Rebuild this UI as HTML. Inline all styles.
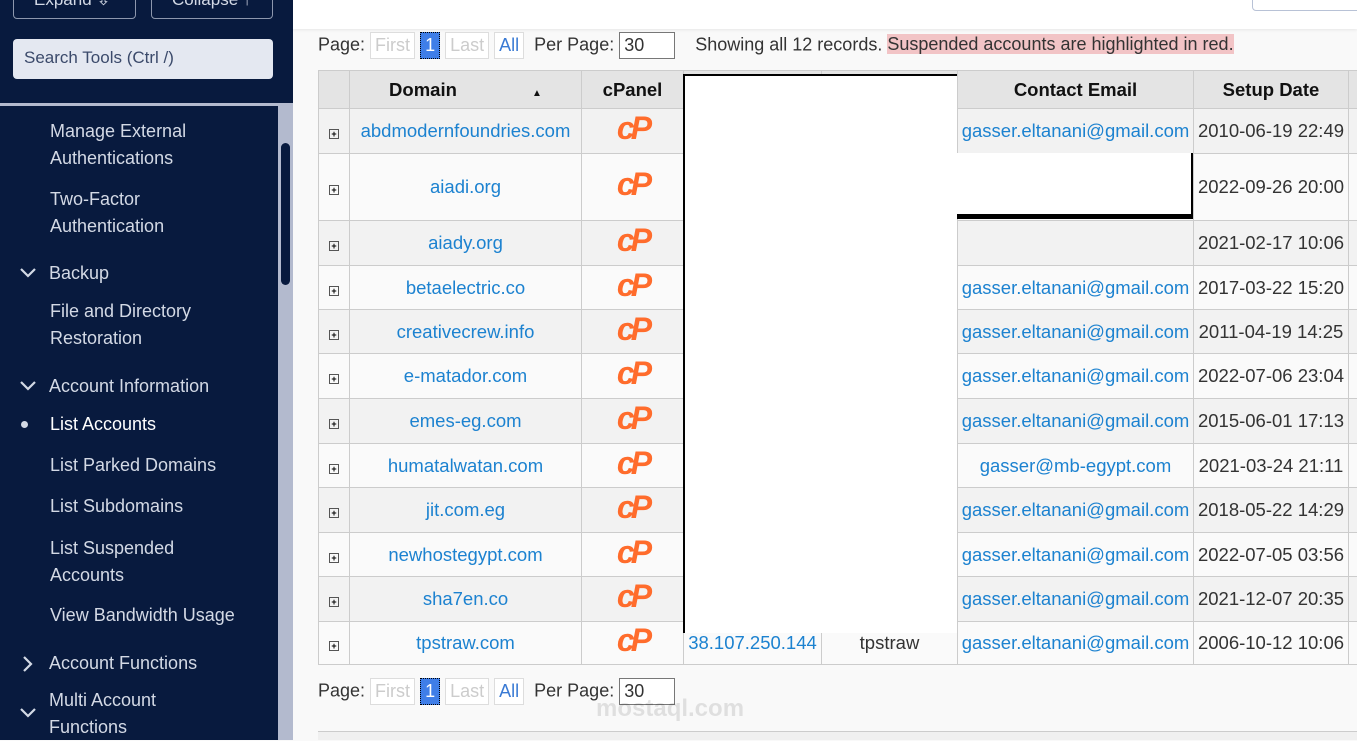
<!DOCTYPE html><html><head><meta charset="utf-8"><style>
*{margin:0;padding:0;box-sizing:border-box}
body{width:1357px;height:740px;overflow:hidden;background:#f9f9f9;font-family:"Liberation Sans",sans-serif;position:relative}
#sb{position:absolute;left:0;top:0;width:293px;height:740px;background:#081a3e}
#sb .t{position:absolute;color:#d3d9e5;font-size:18px;line-height:27px}
.btn{position:absolute;top:-10px;height:29px;border:1px solid #8d97ad;border-radius:4px;color:#d3d9e5;font-size:17px;padding:0 20px;line-height:18px}
#track{position:absolute;left:278px;top:106px;width:15px;height:634px;background:#b3bace}
#thumb{position:absolute;left:281px;top:143px;width:9px;height:142px;background:#081a3e;border-radius:5px}
#top{position:absolute;left:293px;top:0;width:1064px;height:29px;background:#fff;box-shadow:0 1px 3px rgba(0,0,0,.08)}
.pg{position:absolute;font-size:18px;color:#333;font-family:"Liberation Sans",sans-serif;white-space:nowrap}
.pb{display:inline-block;border:1px solid #ddd;background:#fff;color:#ccc;padding:0 4px;height:27px;line-height:25px;vertical-align:middle}
table{position:absolute;left:318px;top:70px;border-collapse:collapse;font-size:18.5px;color:#333;table-layout:fixed;width:1050px}
td,th{border:1px solid #ccc;text-align:center;padding:0;white-space:nowrap;overflow:hidden}
th{background:#e4e4e4;height:38px;font-weight:bold;color:#111}
tr:nth-child(even) td{background:#f2f2f2}
tr:nth-child(odd) td{background:#fafafa}
a{color:#1c82d0;text-decoration:none}
.ex{display:inline-block;width:10px;height:10px;border:1px solid #555;font-size:9px;line-height:8px;color:#000;text-align:center;font-weight:bold}
.cp{color:#ff6c2c;font-weight:bold;font-style:italic;font-size:32px;letter-spacing:-4px;font-family:"Liberation Sans",sans-serif;line-height:20px}
</style></head><body>
<div id="sb">
<div class="btn" style="left:13px;width:123px">Expand ⇩</div>
<div class="btn" style="left:151px;width:122px">Collapse ↑</div>
<div style="position:absolute;left:13px;top:39px;width:260px;height:40px;background:#e4e8f1;border-radius:4px;color:#3b4a6b;font-size:17px;padding:9px 11px">Search Tools (Ctrl /)</div>
<div style="position:absolute;left:0;top:103px;width:293px;height:3px;background:#b3bace"></div>
<div class="t" style="left:50px;top:118px">Manage External<br>Authentications</div>
<div class="t" style="left:50px;top:186px">Two-Factor<br>Authentication</div>
<div class="t" style="left:49px;top:260px">Backup</div>
<div class="t" style="left:50px;top:298px">File and Directory<br>Restoration</div>
<div class="t" style="left:49px;top:373px">Account Information</div>
<div style="position:absolute;left:21px;top:421px;width:7px;height:7px;border-radius:50%;background:#d3d9e5"></div>
<div class="t" style="left:50px;top:411px;color:#fff">List Accounts</div>
<div class="t" style="left:50px;top:452px">List Parked Domains</div>
<div class="t" style="left:50px;top:493px">List Subdomains</div>
<div class="t" style="left:50px;top:535px">List Suspended<br>Accounts</div>
<div class="t" style="left:50px;top:602px">View Bandwidth Usage</div>
<svg style="position:absolute;left:22px;top:655px" width="12" height="18"><path d="M2 2l7 7-7 7" stroke="#d3d9e5" stroke-width="2.2" fill="none"/></svg>
<div class="t" style="left:49px;top:650px">Account Functions</div>
<div class="t" style="left:49px;top:687px">Multi Account<br>Functions</div>
<svg style="position:absolute;left:19px;top:267px" width="18" height="12"><path d="M2 2l7 7 7-7" stroke="#d3d9e5" stroke-width="2.2" fill="none"/></svg>
<svg style="position:absolute;left:19px;top:380px" width="18" height="12"><path d="M2 2l7 7 7-7" stroke="#d3d9e5" stroke-width="2.2" fill="none"/></svg>
<svg style="position:absolute;left:19px;top:707px" width="18" height="12"><path d="M2 2l7 7 7-7" stroke="#d3d9e5" stroke-width="2.2" fill="none"/></svg>
<div id="track"></div><div id="thumb"></div>
</div>
<div id="top"><div style="position:absolute;left:959px;top:-5px;width:110px;height:16px;border:1px solid #b8c2d6;border-radius:4px"></div></div>
<div class="pg" style="left:318px;top:32px">Page: <span class="pb">First</span> <span class="pb" style="background:#3f7ee8;color:#fff;border:1px dotted #000">1</span> <span class="pb">Last</span> <span class="pb" style="color:#3a7ad4">All</span> &nbsp;Per Page: <span class="pb" style="width:56px;color:#333;border-color:#777">30</span> &nbsp;&nbsp; Showing all 12 records. <span style="background:#f2c4c6">Suspended accounts are highlighted in red.</span></div>
<table>
<colgroup><col style="width:31px"><col style="width:232px"><col style="width:102px"><col style="width:138px"><col style="width:136px"><col style="width:236px"><col style="width:155px"><col style="width:20px"></colgroup>
<tr><th></th><th>Domain <span style="font-size:10px;margin-left:70px">▲</span></th><th>cPanel</th><th></th><th></th><th>Contact Email</th><th>Setup Date</th><th></th></tr>
<tr style="height:45px"><td><span class="ex">+</span></td><td><a>abdmodernfoundries.com</a></td><td><span class="cp">cP</span></td><td></td><td></td><td><a>gasser.eltanani@gmail.com</a></td><td>2010-06-19 22:49</td><td></td></tr>
<tr style="height:67px"><td><span class="ex">+</span></td><td><a>aiadi.org</a></td><td><span class="cp">cP</span></td><td></td><td></td><td></td><td>2022-09-26 20:00</td><td></td></tr>
<tr style="height:45px"><td><span class="ex">+</span></td><td><a>aiady.org</a></td><td><span class="cp">cP</span></td><td></td><td></td><td></td><td>2021-02-17 10:06</td><td></td></tr>
<tr style="height:44px"><td><span class="ex">+</span></td><td><a>betaelectric.co</a></td><td><span class="cp">cP</span></td><td></td><td></td><td><a>gasser.eltanani@gmail.com</a></td><td>2017-03-22 15:20</td><td></td></tr>
<tr style="height:44px"><td><span class="ex">+</span></td><td><a>creativecrew.info</a></td><td><span class="cp">cP</span></td><td></td><td></td><td><a>gasser.eltanani@gmail.com</a></td><td>2011-04-19 14:25</td><td></td></tr>
<tr style="height:45px"><td><span class="ex">+</span></td><td><a>e-matador.com</a></td><td><span class="cp">cP</span></td><td></td><td></td><td><a>gasser.eltanani@gmail.com</a></td><td>2022-07-06 23:04</td><td></td></tr>
<tr style="height:45px"><td><span class="ex">+</span></td><td><a>emes-eg.com</a></td><td><span class="cp">cP</span></td><td></td><td></td><td><a>gasser.eltanani@gmail.com</a></td><td>2015-06-01 17:13</td><td></td></tr>
<tr style="height:44px"><td><span class="ex">+</span></td><td><a>humatalwatan.com</a></td><td><span class="cp">cP</span></td><td></td><td></td><td><a>gasser@mb-egypt.com</a></td><td>2021-03-24 21:11</td><td></td></tr>
<tr style="height:45px"><td><span class="ex">+</span></td><td><a>jit.com.eg</a></td><td><span class="cp">cP</span></td><td></td><td></td><td><a>gasser.eltanani@gmail.com</a></td><td>2018-05-22 14:29</td><td></td></tr>
<tr style="height:44px"><td><span class="ex">+</span></td><td><a>newhostegypt.com</a></td><td><span class="cp">cP</span></td><td></td><td></td><td><a>gasser.eltanani@gmail.com</a></td><td>2022-07-05 03:56</td><td></td></tr>
<tr style="height:45px"><td><span class="ex">+</span></td><td><a>sha7en.co</a></td><td><span class="cp">cP</span></td><td></td><td></td><td><a>gasser.eltanani@gmail.com</a></td><td>2021-12-07 20:35</td><td></td></tr>
<tr style="height:43px"><td><span class="ex">+</span></td><td><a>tpstraw.com</a></td><td><span class="cp">cP</span></td><td><a>38.107.250.144</a></td><td>tpstraw</td><td><a>gasser.eltanani@gmail.com</a></td><td>2006-10-12 10:06</td><td></td></tr>
</table>
<div style="position:absolute;left:683px;top:74px;width:274px;height:559px;background:#fff;border-left:2px solid #000;border-top:2px solid #000"></div>
<div style="position:absolute;left:957px;top:153px;width:236px;height:66px;background:#fff;border-right:2px solid #000;border-bottom:5px solid #000"></div>
<div class="pg" style="left:318px;top:678px">Page: <span class="pb">First</span> <span class="pb" style="background:#3f7ee8;color:#fff;border:1px dotted #000">1</span> <span class="pb">Last</span> <span class="pb" style="color:#3a7ad4">All</span> &nbsp;Per Page: <span class="pb" style="width:56px;color:#333;border-color:#777">30</span></div>
<div style="position:absolute;left:318px;top:731px;width:1039px;height:9px;background:#f0f0f0;border-top:1px solid #ccc"></div>
<div style="position:absolute;left:596px;top:695px;color:rgba(0,0,0,.1);font-size:24px;font-weight:bold">mostaql.com</div>
</body></html>
